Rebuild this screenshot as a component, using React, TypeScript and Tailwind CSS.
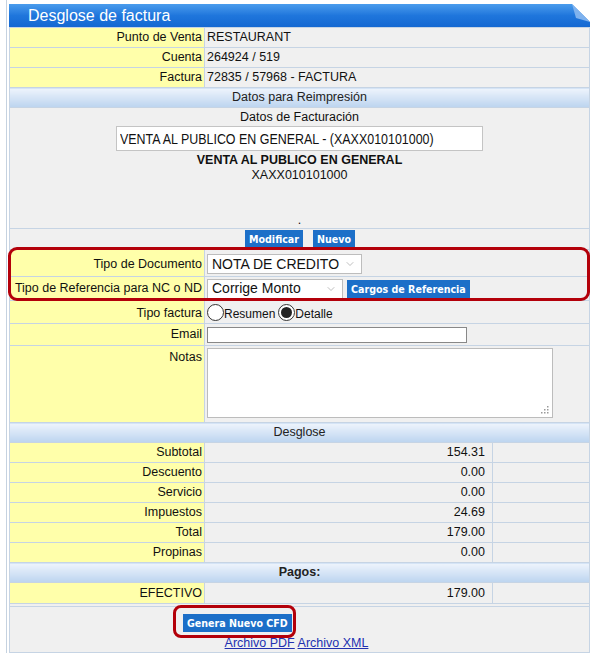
import { ChevronDown } from 'lucide-react'

const label = 'bg-[#ffffaa] text-right pr-[2px] align-middle border border-[#c6d4e4] whitespace-nowrap'
const cell = 'bg-[#f0f0f0] border border-[#c6d4e4] align-middle'
const section =
    'bg-gradient-to-b from-[#eef4fc] to-[#bcd4ef] border border-[#c6d4e4] text-center text-[#222]'
const blueBtn =
    'bg-[#1c6fc8] text-white font-bold text-[10.6px] leading-[18px] px-[4px] whitespace-nowrap [font-family:"DejaVu_Sans_Condensed","DejaVu_Sans",sans-serif] [font-stretch:condensed]'

function Select({ value, width }: { value: string; width: string }) {
    return (
        <div
            className={`${width} h-[20px] bg-white border border-[#bdbdbd] flex items-center justify-between pl-[4px] pr-[5px] text-[14px] text-[#111] whitespace-nowrap`}
        >
            <span>{value}</span>
            <ChevronDown className="w-3 h-3 text-[#999]" strokeWidth={1.25} />
        </div>
    )
}

function Radio({ checked }: { checked?: boolean }) {
    return (
        <span className="inline-flex w-[17px] h-[17px] rounded-full border border-[#333] bg-white items-center justify-center">
            {checked && <span className="w-[11px] h-[11px] rounded-full bg-[#222]" />}
        </span>
    )
}

const totals: [string, string][] = [
    ['Subtotal', '154.31'],
    ['Descuento', '0.00'],
    ['Servicio', '0.00'],
    ['Impuestos', '24.69'],
    ['Total', '179.00'],
    ['Propinas', '0.00'],
]

export default function App() {
    return (
        <div className="w-[591px] h-[663px] bg-white text-[12.5px] text-[#111] [font-family:'Liberation_Sans',Arial,sans-serif]">
            <div className="relative ml-[6px] w-[584px] border-l border-[#c5d2e0] pl-[2px] pt-[4px]">
                <div className="relative h-[23px] bg-gradient-to-b from-[#4a9cec] via-[#1f76dc] to-[#1468d2] text-white text-[16px] leading-[23px] pl-[19px]">
                    Desglose de factura
                    <svg className="absolute right-0 top-0" width="18" height="18" viewBox="0 0 18 18">
                        <polygon points="0,0 18,0 18,18" fill="#ffffff" />
                        <polygon points="0,0 18,18 4,14" fill="#7fb2ee" />
                    </svg>
                </div>
                <table className="w-[580px] table-fixed border-collapse">
                    <colgroup>
                        <col className="w-[195px]" />
                        <col className="w-[288px]" />
                        <col className="w-[97px]" />
                    </colgroup>
                    <tbody>
                        {[
                            ['Punto de Venta', 'RESTAURANT'],
                            ['Cuenta', '264924 / 519'],
                            ['Factura', '72835 / 57968 - FACTURA'],
                        ].map(([k, v]) => (
                            <tr key={k} className="h-[20px]">
                                <td className={label}>{k}</td>
                                <td colSpan={2} className={`${cell} pl-[2px]`}>
                                    {v}
                                </td>
                            </tr>
                        ))}
                        <tr className="h-[20px]">
                            <td colSpan={3} className={section}>
                                Datos para Reimpresión
                            </td>
                        </tr>
                        <tr>
                            <td colSpan={3} className={`${cell} text-center h-[120px] align-top`}>
                                <div className="flex flex-col items-center pt-[1px]">
                                    <div className="leading-[17px]">Datos de Facturación</div>
                                    <div className="w-[367px] h-[25px] bg-white border border-[#c4c4c4] text-left pl-[3px] text-[15px] leading-[23px] whitespace-nowrap overflow-hidden">
                                        <span className="inline-block origin-left scale-x-[0.83]">
                                            VENTA AL PUBLICO EN GENERAL - (XAXX010101000)
                                        </span>
                                    </div>
                                    <div className="font-bold leading-[16px] mt-px">VENTA AL PUBLICO EN GENERAL</div>
                                    <div className="leading-[15px]">XAXX010101000</div>
                                    <div className="leading-[15px] mt-[30px]">.</div>
                                </div>
                            </td>
                        </tr>
                        <tr className="h-[21px]">
                            <td colSpan={3} className={`${cell} text-center`}>
                                <div className="flex justify-center gap-[10px] pl-[1px]">
                                    <button className={blueBtn}>Modificar</button>
                                    <button className={blueBtn}>Nuevo</button>
                                </div>
                            </td>
                        </tr>
                        <tr className="h-[27px]">
                            <td className={`${label} pt-[2px]`}>Tipo de Documento</td>
                            <td colSpan={2} className={`${cell} pl-[2px] pt-[2px]`}>
                                <Select value="NOTA DE CREDITO" width="w-[155px]" />
                            </td>
                        </tr>
                        <tr className="h-[24px]">
                            <td className={label}>Tipo de Referencia para NC o ND</td>
                            <td colSpan={2} className={`${cell} pl-[2px]`}>
                                <div className="flex items-center gap-[4px]">
                                    <Select value="Corrige Monto" width="w-[136px]" />
                                    <button className={blueBtn}>Cargos de Referencia</button>
                                </div>
                            </td>
                        </tr>
                        <tr className="h-[23px]">
                            <td className={`${label} pt-[2px]`}>Tipo factura</td>
                            <td colSpan={2} className={`${cell} pl-[2px]`}>
                                <div className="flex items-center">
                                    <Radio />
                                    <span className="text-[12px] mt-[4px] mr-[3px]">Resumen</span>
                                    <Radio checked />
                                    <span className="text-[12px] mt-[4px]">Detalle</span>
                                </div>
                            </td>
                        </tr>
                        <tr className="h-[22px]">
                            <td className={label}>Email</td>
                            <td colSpan={2} className={`${cell} pl-[2px]`}>
                                <div className="w-[260px] h-[16px] bg-white border border-[#888]" />
                            </td>
                        </tr>
                        <tr className="h-[77px]">
                            <td className={`${label} align-top pt-[2px]`}>Notas</td>
                            <td colSpan={2} className={`${cell} pl-[2px] align-top pt-[2px]`}>
                                <div className="relative w-[346px] h-[70px] bg-white border border-[#bcbcbc]">
                                    <svg className="absolute right-[3px] bottom-[3px]" width="8" height="8" viewBox="0 0 8 8">
                                        <g fill="#9a9a9a">
                                            <rect x="6" y="0" width="1.5" height="1.5" />
                                            <rect x="3" y="3" width="1.5" height="1.5" />
                                            <rect x="6" y="3" width="1.5" height="1.5" />
                                            <rect x="0" y="6" width="1.5" height="1.5" />
                                            <rect x="3" y="6" width="1.5" height="1.5" />
                                            <rect x="6" y="6" width="1.5" height="1.5" />
                                        </g>
                                    </svg>
                                </div>
                            </td>
                        </tr>
                        <tr className="h-[20px]">
                            <td colSpan={3} className={section}>
                                Desglose
                            </td>
                        </tr>
                        {totals.map(([k, v]) => (
                            <tr key={k} className="h-[20px]">
                                <td className={label}>{k}</td>
                                <td className={`${cell} text-right pr-[7px]`}>{v}</td>
                                <td className={cell} />
                            </tr>
                        ))}
                        <tr className="h-[20px]">
                            <td colSpan={3} className={`${section} font-bold`}>
                                Pagos:
                            </td>
                        </tr>
                        <tr className="h-[21px]">
                            <td className={label}>EFECTIVO</td>
                            <td className={`${cell} text-right pr-[7px]`}>179.00</td>
                            <td className={cell} />
                        </tr>
                        <tr className="h-[3px]">
                            <td colSpan={3} className={cell} />
                        </tr>
                        <tr className="h-[46px]">
                            <td colSpan={3} className={`${cell} align-top pt-[7px]`}>
                                <div className="pl-[173px]">
                                    <button className={blueBtn}>Genera Nuevo CFD</button>
                                </div>
                                <div className="text-center leading-[16px] mt-[2px] pr-[6px]">
                                    <a className="text-[#2230b0] underline">Archivo PDF</a>{' '}
                                    <a className="text-[#2230b0] underline">Archivo XML</a>
                                </div>
                            </td>
                        </tr>
                    </tbody>
                </table>
                <div className="absolute left-[1px] top-[247px] w-[582px] h-[54px] border-[3px] border-[#b3000a] rounded-[9px] pointer-events-none" />
                <div className="absolute left-[166px] top-[605px] w-[123px] h-[33px] border-[3px] border-[#b3000a] rounded-[8px] pointer-events-none" />
            </div>
        </div>
    )
}
